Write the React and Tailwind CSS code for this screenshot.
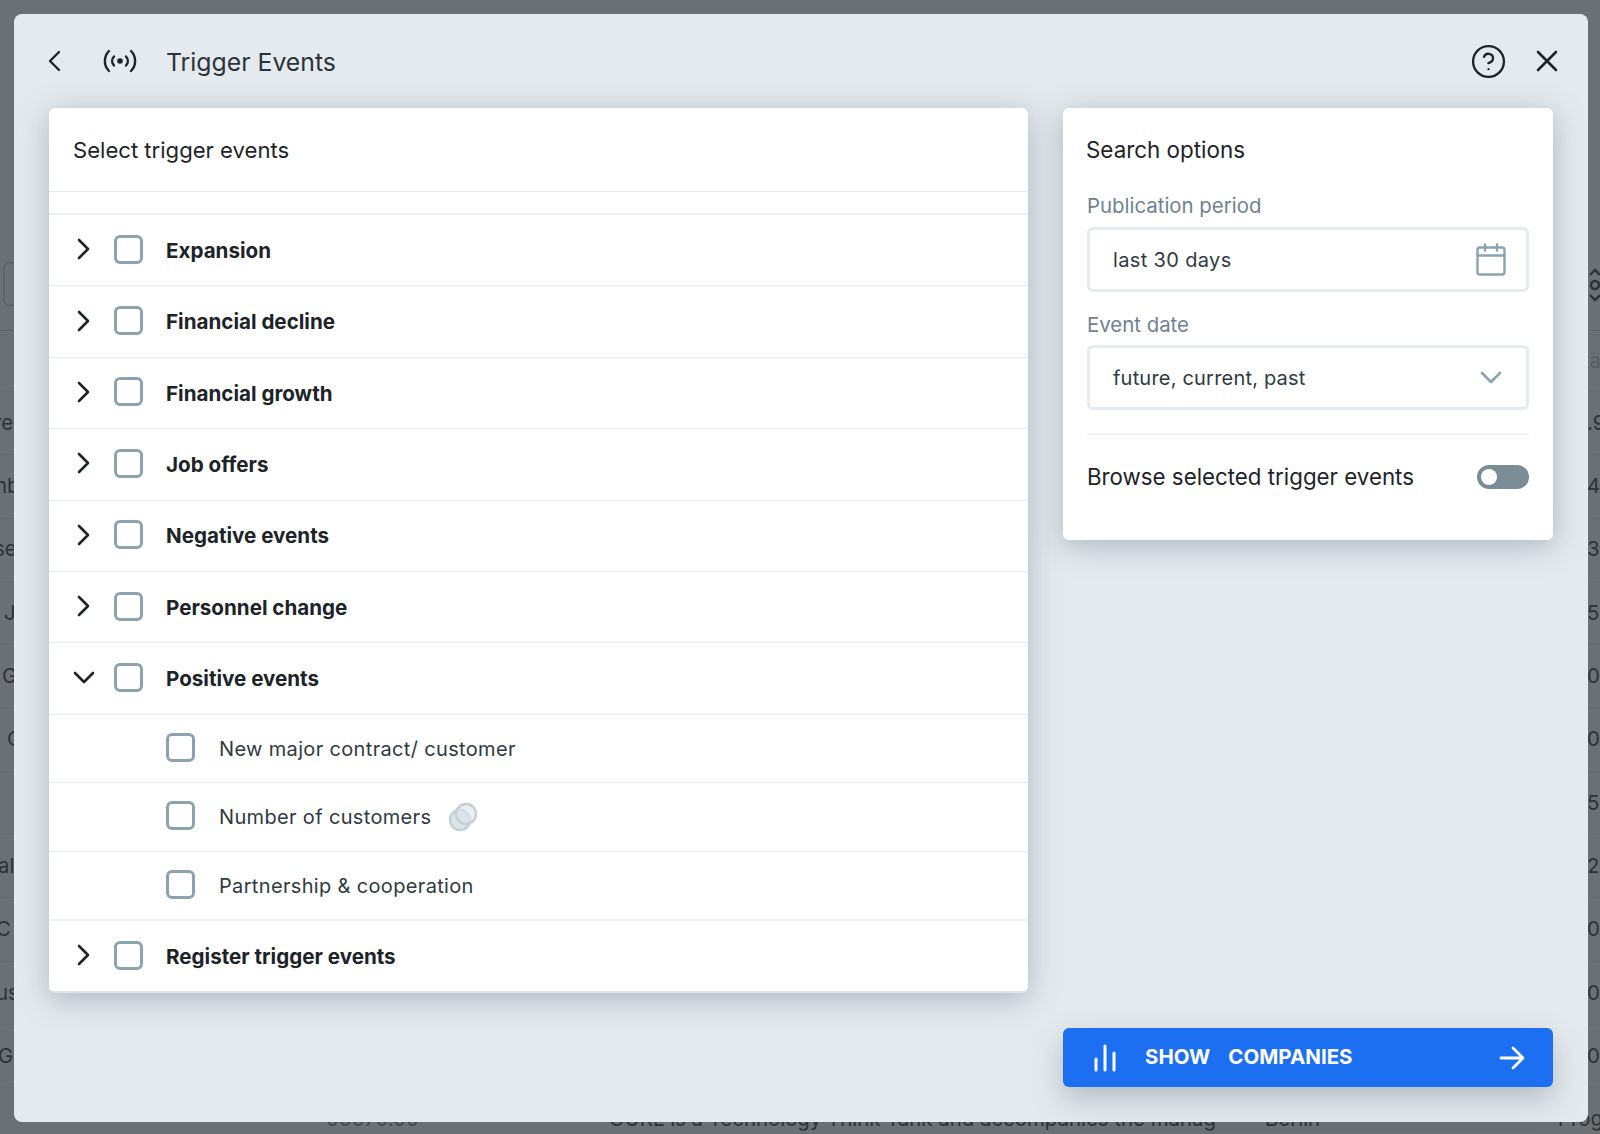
import { CircleHelp } from "lucide-react";

const backdropRows = [
  { left: "re", leftClass: "ml-[-6px]", right: ".9" },
  { left: "nb", leftClass: "ml-[-5px]", right: "43" },
  { left: "se", leftClass: "ml-[-6px]", right: "30" },
  { left: "J", leftClass: "ml-[4px]", right: "50" },
  { left: "G", leftClass: "ml-[2px]", right: "01" },
  { left: "C", leftClass: "ml-[7px]", right: "0" },
  { left: "", leftClass: "", right: "51" },
  { left: "al", leftClass: "ml-[-2px]", right: "2" },
  { left: "C", leftClass: "ml-[-4px]", right: "08" },
  { left: "us", leftClass: "ml-[-4px]", right: "05" },
  { left: "Gr", leftClass: "ml-[-2px]", right: "00" },
];

const topRows = ["Expansion", "Financial decline", "Financial growth", "Job offers", "Negative events", "Personnel change"];

function Checkbox() {
  return <span className="block w-[29px] h-[29px] shrink-0 rounded-md border-[3px] border-[#8ba3ae] bg-white" />;
}

function Chevron({ open }) {
  if (open) {
    return (
      <svg width="22" height="14" viewBox="0 0 22 14" fill="none" stroke="#1d2429" strokeWidth="2.6" strokeLinecap="round" strokeLinejoin="round">
        <path d="M2 2l9 9 9-9" />
      </svg>
    );
  }
  return (
    <svg width="14" height="22" viewBox="0 0 14 22" fill="none" stroke="#1d2429" strokeWidth="2.6" strokeLinecap="round" strokeLinejoin="round">
      <path d="M2 2l9 9-9 9" />
    </svg>
  );
}

function GroupRow({ label, open, className }) {
  return (
    <div className={`flex items-center pl-[15px] pb-[2px] border-b border-[#e6ebef] ${className}`}>
      <span className="flex w-[40px] justify-center">
        <Chevron open={open} />
      </span>
      <span className="ml-[10px]">
        <Checkbox />
      </span>
      <span className="ml-[23px] mt-[4px] text-[20.6px] font-bold text-[#1d2429]">{label}</span>
    </div>
  );
}

function SubRow({ label, children, className }) {
  return (
    <div className={`flex items-center pl-[117px] pb-[2px] ${className}`}>
      <Checkbox />
      <span className="ml-[24px] mt-[3px] text-[20px] tracking-[0.34px] text-[#2f3a42]">{label}</span>
      {children}
    </div>
  );
}

function Backdrop() {
  return (
    <div className="text-[20.4px] text-[#2e3236]">
      <div className="h-[331px] border-b border-[#5e6367] pt-[262px]">
        <div className="flex justify-between">
          <div className="ml-[3px] w-[40px] h-[44px] rounded-md border-2 border-[#5d646a]" />
          <svg className="mr-[-2px] mt-[5px]" width="14" height="36" viewBox="0 0 14 36" fill="none" stroke="#2e3236" strokeWidth="2.4">
            <path d="M2 8l5-5 5 5M2 28l5 5 5-5" />
            <circle cx="7" cy="18" r="4" />
          </svg>
        </div>
      </div>
      <div className="flex h-[61px] items-center justify-end border-b border-[#666b6f] text-[#585d62]">
        <span className="mr-[-6px]">tal</span>
      </div>
      {backdropRows.map((row) => (
        <div key={row.right} className="flex h-[63.3px] items-center justify-between whitespace-nowrap border-b border-[#666b6f]">
          <span className={row.leftClass}>{row.left}</span>
          <span className="w-[13px]">{row.right}</span>
        </div>
      ))}
      <div className="flex h-[63px] items-center whitespace-nowrap">
        <span className="ml-[326px] w-[283px] shrink-0 text-[#43474b]">00070.00</span>
        <span className="w-[656px] shrink-0">OURL is a Technology Think Tank and accompanies the manag</span>
        <span className="w-[293px] shrink-0">Berlin</span>
        <span className="shrink-0">Progr</span>
      </div>
    </div>
  );
}

export default function App() {
  return (
    <div className="relative h-[1134px] w-[1600px] overflow-hidden bg-[#6b7075] font-['Inter',sans-serif]">
      <Backdrop />

      {/* Modal */}
      <div className="absolute left-[14px] top-[14px] h-[1108px] w-[1574px] rounded-lg bg-[#e5eaee]">
        {/* Header */}
        <div className="flex h-[94px] items-center pl-[33px] pr-[29px] text-[#1d2429]">
          <svg width="14" height="22" viewBox="0 0 14 22" fill="none" stroke="currentColor" strokeWidth="2.4" strokeLinecap="round" strokeLinejoin="round">
            <path d="M12 2l-9 9 9 9" />
          </svg>
          <svg className="ml-[41px]" width="36" height="24" viewBox="0 0 36 24" fill="none" stroke="currentColor" strokeWidth="2.4" strokeLinecap="round">
            <path d="M7 2C1.500 7.500 1.500 16.500 7 22M29 2c5.500 5.500 5.500 14.500 0 20" />
            <path d="M12 7.500c-2.500 2.700-2.500 6.300 0 9M24 7.500c2.500 2.700 2.500 6.300 0 9" />
            <circle cx="18" cy="12" r="2.800" fill="currentColor" stroke="none" />
          </svg>
          <h1 className="ml-[28px] mt-[4px] text-[24.8px] font-normal text-[#2b343b]">Trigger Events</h1>
          <CircleHelp className="ml-auto" size={37} strokeWidth={1.5} color="#1d2429" />
          <svg className="ml-[28px]" width="24" height="24" viewBox="0 0 24 24" fill="none" stroke="currentColor" strokeWidth="2.6" strokeLinecap="round">
            <path d="M3 3l18 18M21 3L3 21" />
          </svg>
        </div>

        <div className="flex items-start gap-[35px] px-[35px]">
          {/* Trigger events list */}
          <div className="h-[885px] w-[979px] overflow-hidden rounded-md border-b-2 border-[#dfe4e8] bg-white shadow-[0_6px_30px_rgba(60,80,100,0.34)]">
            <div className="flex h-[84px] items-center border-b border-[#e6ebef] pl-[24px] pt-[3px] text-[22.1px] text-[#1d2429]">
              Select trigger events
            </div>
            <div className="h-[23px] border-b-2 border-[#eef1f4]" />
            {topRows.map((label) => (
              <GroupRow key={label} label={label} className="h-[71.4px]" />
            ))}
            <GroupRow label="Positive events" open className="h-[71.4px]" />
            <SubRow label="New major contract/ customer" className="h-[68px] border-b border-[#e6ebef]" />
            <SubRow label="Number of customers" className="h-[69px] border-b border-[#e6ebef]">
              <svg className="ml-[17px] mt-[3px]" width="30" height="30" viewBox="0 0 30 30" fill="#dde4e9" stroke="#c3d0d8" strokeWidth="2.400">
                <circle cx="12" cy="18" r="10" />
                <circle cx="18" cy="12" r="10" fillOpacity="0.6" />
              </svg>
            </SubRow>
            <SubRow label="Partnership & cooperation" className="h-[69px] border-b-2 border-[#eef1f4]" />
            <GroupRow label="Register trigger events" className="h-[71px] border-b-0" />
          </div>

          {/* Search options + action */}
          <div className="flex h-[979px] w-[490px] flex-col justify-between">
            <div className="h-[432px] rounded-md bg-white px-[24px] pt-[26px] shadow-[0_6px_30px_rgba(60,80,100,0.34)]">
              <h2 className="ml-[-1px] text-[22.4px] font-normal leading-[32px] text-[#1d2429]">Search options</h2>
              <div className="mt-[28px] text-[20.4px] leading-[24px] text-[#6f8290]">Publication period</div>
              <div className="mt-[9px] flex h-[65px] items-center justify-between rounded-md border-[3px] border-[#e6ebef] pl-[23px] pr-[20px] text-[20px] tracking-[0.35px] text-[#2f3a42]">
                last 30 days
                <svg width="30" height="33" viewBox="0 0 30 33" fill="none" stroke="#8ba3ae" strokeWidth="2.400" strokeLinecap="round">
                  <rect x="1.500" y="4.500" width="27" height="27" rx="2.500" />
                  <path d="M1.500 12.500h27M9 1.500v6M21 1.500v6" />
                </svg>
              </div>
              <div className="mt-[21px] text-[20.4px] leading-[24px] text-[#6f8290]">Event date</div>
              <div className="mt-[8px] flex h-[65px] items-center justify-between rounded-md border-[3px] border-[#e6ebef] pl-[23px] pr-[24px] text-[20px] tracking-[0.2px] text-[#2f3a42]">
                future, current, past
                <svg width="22" height="13" viewBox="0 0 22 13" fill="none" stroke="#8ba3ae" strokeWidth="2.600" strokeLinecap="round" strokeLinejoin="round">
                  <path d="M2 2l9 9 9-9" />
                </svg>
              </div>
              <div className="mt-[24px] flex h-[84px] items-center justify-between border-t border-[#e6ebef] text-[22.3px] text-[#1d2429]">
                Browse selected trigger events
                <span className="flex h-[24px] w-[52px] items-center rounded-full bg-[#7a8c96] pl-[4px]">
                  <span className="h-[16px] w-[16px] rounded-full bg-white" />
                </span>
              </div>
            </div>

            <button className="flex h-[59px] items-center rounded-md bg-[#1c6ff0] pl-[31px] pr-[28px] text-[20.5px] font-bold text-white shadow-[0_12px_30px_rgba(60,80,100,0.3)]">
              <svg width="22" height="28" viewBox="0 0 22 28" fill="none" stroke="currentColor" strokeWidth="3" strokeLinecap="round">
                <path d="M2 15v11M11 2v24M20 9v17" />
              </svg>
              <span className="ml-[29px]">SHOW</span>
              <span className="ml-[18px]">COMPANIES</span>
              <svg className="ml-auto" width="26" height="24" viewBox="0 0 26 24" fill="none" stroke="currentColor" strokeWidth="2.800" strokeLinecap="round" strokeLinejoin="round">
                <path d="M2 12h22M14 2l10 10-10 10" />
              </svg>
            </button>
          </div>
        </div>
      </div>
    </div>
  );
}
